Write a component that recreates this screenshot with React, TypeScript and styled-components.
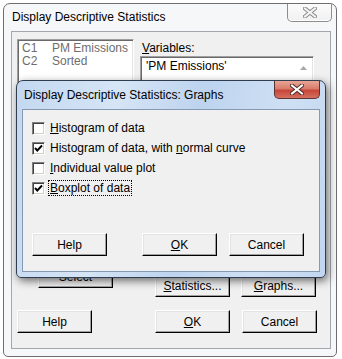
import React from 'react';
import styled, { createGlobalStyle, css } from 'styled-components';

const GlobalStyle = createGlobalStyle`
  html, body {
    margin: 0;
    padding: 0;
    background: #ffffff;
    overflow: hidden;
  }
  body {
    font-family: "Liberation Sans", Arial, sans-serif;
    font-size: 12px;
    color: #000;
  }
  * {
    box-sizing: border-box;
  }
`;

const Stage = styled.div`
  position: relative;
  width: 342px;
  height: 359px;
  padding: 3px 0 0 3px;
  overflow: hidden;
`;

const Window = styled.div`
  width: 334px;
  height: 354px;
  border: 1px solid #6e6e6e;
  border-radius: 7px 7px 5px 5px;
  background: #f6f7f9;
  display: flex;
  flex-direction: column;
`;

const TitleBar = styled.div`
  position: relative;
  height: 27px;
  flex: none;
  display: flex;
  align-items: center;
  padding: 0 0 2px 8px;
`;

const Modal = styled.div`
  position: absolute;
  left: 16px;
  top: 80px;
  width: 310px;
  height: 198px;
  border: 1px solid #2f3d4f;
  border-radius: 7px 7px 5px 5px;
  background: linear-gradient(100deg, #c3d8f0 0%, #d6e5f6 30%, #bdd3ee 55%, #cfe0f4 80%, #c1d6ef 100%);
  box-shadow: 2px 3px 9px rgba(0, 0, 0, 0.55);
  display: flex;
  flex-direction: column;

  ${TitleBar} {
    height: 28px;
    padding: 0 0 0 7px;
  }
`;

const Title = styled.span`
  white-space: nowrap;
`;

const CloseButton = styled.div<{ $active?: boolean }>`
  position: absolute;
  top: 0;
  right: ${({ $active }) => ($active ? 5 : 4)}px;
  width: ${({ $active }) => ($active ? 46 : 45)}px;
  height: 18px;
  border: 1px solid ${({ $active }) => ($active ? '#5b3534' : '#8d8d8d')};
  border-top: none;
  border-radius: 0 0 5px 5px;
  display: flex;
  align-items: center;
  justify-content: center;
  ${({ $active }) =>
    $active
      ? css`
          background: linear-gradient(180deg, #e8a596 0%, #d97c6c 45%, #c7463a 55%, #d5705f 100%);
        `
      : css`
          background: linear-gradient(180deg, #fbfbfb 0%, #f1f1f1 100%);
          box-shadow: inset 0 -1px 0 #ffffff;
        `}
`;

const Client = styled.div`
  flex: 1;
  margin: 0 5px 7px 7px;
  border: 1px solid #a3a7ad;
  background: #f0f0f0;
`;

const ModalClient = styled(Client)`
  margin: 0 5px 5px 5px;
  border-color: #8599b2;
  padding: 8px 0 0 9px;
  display: flex;
  flex-direction: column;
`;

const OuterBody = styled.div`
  padding: 7px 0 0 5px;
  display: flex;
  flex-direction: column;
`;

const TopArea = styled.div`
  display: flex;
  gap: 6px;
  height: 258px;
`;

const LeftCol = styled.div`
  width: 117px;
  display: flex;
  flex-direction: column;
  align-items: center;
  gap: 6px;
`;

const RightCol = styled.div`
  width: 176px;
  display: flex;
  flex-direction: column;
`;

const sunken = css`
  border: 1px solid;
  border-color: #a0a0a0 #ffffff #ffffff #a0a0a0;
  box-shadow: inset 1px 1px 0 #696969, inset -1px -1px 0 #e3e3e3;
  background: #ffffff;
`;

const ListBox = styled.div`
  ${sunken}
  width: 117px;
  height: 220px;
  padding: 2px 0 0 4px;
  color: #6d6d6d;
`;

const ListItem = styled.div`
  display: flex;
  line-height: 13px;
`;

const ColName = styled.span`
  width: 30px;
`;

const FieldLabel = styled.div`
  margin: 2px 0 0 2px;
  line-height: 14px;
`;

const TextBox = styled.div`
  ${sunken}
  margin-top: 1px;
  width: 174px;
  height: 60px;
  display: flex;
  padding: 2px 0 0 5px;
`;

const TextValue = styled.div`
  flex: 1;
  line-height: 14px;
`;

const ScrollUp = styled.div`
  width: 17px;
  height: 17px;
  margin-right: 1px;
  display: flex;
  align-items: center;
  justify-content: center;
`;

const Spacer = styled.div`
  flex: 1;
`;

const SideButtons = styled.div`
  display: flex;
  gap: 11px;
  padding-left: 15px;
`;

const Button = styled.button`
  width: 75px;
  height: 23px;
  padding: 0;
  font: inherit;
  color: #000;
  background: #f0f0f0;
  border: 1px solid;
  border-color: #ffffff #000000 #000000 #ffffff;
  box-shadow: inset -1px -1px 0 #a0a0a0, inset 1px 1px 0 #e3e3e3;
  line-height: 20px;
  text-align: center;
  flex: none;
`;

const BottomRow = styled.div<{ $first: number }>`
  display: grid;
  grid-template-columns: ${({ $first }) => $first}px 75px 75px;
  column-gap: 12px;
`;

const OuterBottom = styled(BottomRow)`
  margin-top: 13px;
`;

const ModalButtons = styled(BottomRow)`
  margin-top: 35px;
`;

const CheckList = styled.div`
  display: flex;
  flex-direction: column;
`;

const CheckRow = styled.div`
  height: 20px;
  display: flex;
  align-items: center;
`;

const Box = styled.span`
  width: 13px;
  height: 13px;
  border: 1px solid;
  border-color: #808080 #ffffff #ffffff #808080;
  box-shadow: inset 1px 1px 0 #404040, inset -1px -1px 0 #d4d0c8;
  background: #ffffff;
  display: flex;
  align-items: center;
  justify-content: center;
  flex: none;
`;

const CheckLabel = styled.span<{ $focus?: boolean }>`
  margin-left: 3px;
  padding: 0 1px;
  line-height: 14px;
  border: 1px dotted ${({ $focus }) => ($focus ? '#000' : 'transparent')};
`;

const XGlyph = ({ active }: { active?: boolean }) => (
  <svg width="14" height="11" viewBox="0 0 14 11">
    <path
      d="M2 1.5 L12 9.5 M12 1.5 L2 9.5"
      stroke={active ? '#4a2a28' : '#8a8a8a'}
      strokeWidth="4"
      strokeLinecap="square"
    />
    <path
      d="M2 1.5 L12 9.5 M12 1.5 L2 9.5"
      stroke={active ? '#ffffff' : '#f4f4f4'}
      strokeWidth="2"
      strokeLinecap="square"
    />
  </svg>
);

const Check = () => (
  <svg width="9" height="9" viewBox="0 0 9 9">
    <path d="M1 4 L3.3 6.5 L8 1.5" fill="none" stroke="#000" strokeWidth="1.9" />
  </svg>
);

const options = [
  { key: 'H', rest: 'istogram of data', checked: false },
  { key: null, rest: 'Histogram of data, with normal curve', checked: true },
  { key: 'I', rest: 'ndividual value plot', checked: false },
  { key: 'B', rest: 'oxplot of data', checked: true, focus: true },
];

export default function App() {
  return (
    <>
      <GlobalStyle />
      <Stage>
        <Window>
          <TitleBar>
            <Title>Display Descriptive Statistics</Title>
            <CloseButton>
              <XGlyph />
            </CloseButton>
          </TitleBar>
          <Client>
            <OuterBody>
              <TopArea>
                <LeftCol>
                  <ListBox>
                    <ListItem>
                      <ColName>C1</ColName>
                      <span>PM Emissions</span>
                    </ListItem>
                    <ListItem>
                      <ColName>C2</ColName>
                      <span>Sorted</span>
                    </ListItem>
                  </ListBox>
                  <Button>Select</Button>
                </LeftCol>
                <RightCol>
                  <FieldLabel>
                    <u>V</u>ariables:
                  </FieldLabel>
                  <TextBox>
                    <TextValue>'PM Emissions'</TextValue>
                    <ScrollUp>
                      <svg width="7" height="4" viewBox="0 0 7 4">
                        <path d="M0 4 L3.5 0 L7 4 Z" fill="#a8a8a8" />
                      </svg>
                    </ScrollUp>
                  </TextBox>
                  <Spacer />
                  <SideButtons>
                    <Button>
                      <u>S</u>tatistics...
                    </Button>
                    <Button>
                      <u>G</u>raphs...
                    </Button>
                  </SideButtons>
                </RightCol>
              </TopArea>
              <OuterBottom $first={126}>
                <Button>Help</Button>
                <Button>
                  <u>O</u>K
                </Button>
                <Button>Cancel</Button>
              </OuterBottom>
            </OuterBody>
          </Client>
        </Window>

        <Modal>
          <TitleBar>
            <Title>Display Descriptive Statistics: Graphs</Title>
            <CloseButton $active>
              <XGlyph active />
            </CloseButton>
          </TitleBar>
          <ModalClient>
            <CheckList>
              {options.map((o, i) => (
                <CheckRow key={i}>
                  <Box>{o.checked && <Check />}</Box>
                  <CheckLabel $focus={o.focus}>
                    {o.key ? (
                      <>
                        <u>{o.key}</u>
                        {o.rest}
                      </>
                    ) : (
                      <>
                        Histogram of data, with <u>n</u>ormal curve
                      </>
                    )}
                  </CheckLabel>
                </CheckRow>
              ))}
            </CheckList>
            <ModalButtons $first={98}>
              <Button>Help</Button>
              <Button>
                <u>O</u>K
              </Button>
              <Button>Cancel</Button>
            </ModalButtons>
          </ModalClient>
        </Modal>
      </Stage>
    </>
  );
}
